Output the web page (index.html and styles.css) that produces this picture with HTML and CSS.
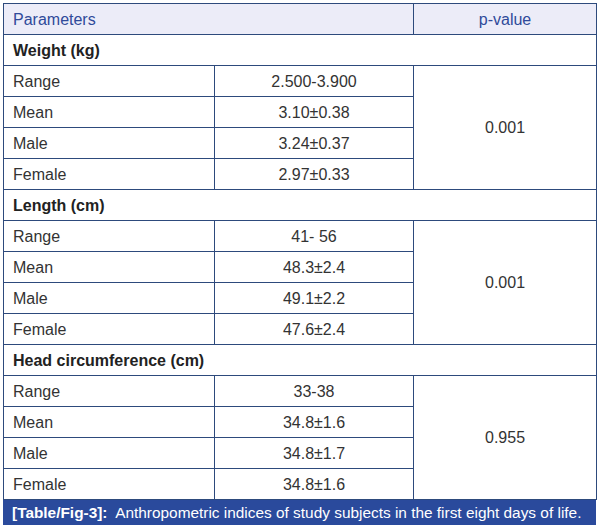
FILE: index.html
```html
<!DOCTYPE html>
<html>
<head>
<meta charset="utf-8">
<link rel="stylesheet" href="styles.css">
</head>
<body>
<div class="wrap">
<table class="data">
<colgroup><col class="c1"><col class="c2"><col class="c3"></colgroup>
<tr class="head"><th class="left" colspan="2">Parameters</th><th>p-value</th></tr>
<tr><td class="group" colspan="3">Weight (kg)</td></tr>
<tr><td>Range</td><td class="mid">2.500-3.900</td><td class="mid" rowspan="4">0.001</td></tr>
<tr><td>Mean</td><td class="mid">3.10±0.38</td></tr>
<tr><td>Male</td><td class="mid">3.24±0.37</td></tr>
<tr><td>Female</td><td class="mid">2.97±0.33</td></tr>
<tr><td class="group" colspan="3">Length (cm)</td></tr>
<tr><td>Range</td><td class="mid">41- 56</td><td class="mid" rowspan="4">0.001</td></tr>
<tr><td>Mean</td><td class="mid">48.3±2.4</td></tr>
<tr><td>Male</td><td class="mid">49.1±2.2</td></tr>
<tr><td>Female</td><td class="mid">47.6±2.4</td></tr>
<tr><td class="group" colspan="3">Head circumference (cm)</td></tr>
<tr><td>Range</td><td class="mid">33-38</td><td class="mid" rowspan="4">0.955</td></tr>
<tr><td>Mean</td><td class="mid">34.8±1.6</td></tr>
<tr><td>Male</td><td class="mid">34.8±1.7</td></tr>
<tr><td>Female</td><td class="mid">34.8±1.6</td></tr>
</table>
<div class="caption"><b>[Table/Fig-3]:</b>&nbsp; Anthropometric indices of study subjects in the first eight days of life.</div>
</div>
</body>
</html>
```
FILE: styles.css
```css
html, body { margin: 0; padding: 0; background: #fff; }
body { font-family: "Liberation Sans", Arial, Helvetica, sans-serif; font-size: 16px; color: #333; }
.wrap { padding: 3px 0 0 3px; width: 593px; }
.data { border-collapse: collapse; width: 593px; table-layout: fixed; }
.c1 { width: 211px; }
.c2 { width: 199px; }
.c3 { width: 183px; }
.data td, .data th { border: 1px solid #2d4a7c; height: 29px; padding: 1px 0 0 9px; font-weight: normal; text-align: left; vertical-align: middle; line-height: 18px; font-size: 16px; }
.data .mid { text-align: center; padding: 1px 0 0 0; }
.head th { background: #ececf8; color: #2f4a9a; text-align: center; padding: 1px 0 0 0; }
.head th.left { text-align: left; padding-left: 9px; }
.data td.group { font-weight: bold; color: #222; }
.caption { background: #2a4a9c; color: #fff; height: 25px; line-height: 25px; padding-left: 9px; font-size: 15.4px; white-space: nowrap; }
.caption b { font-weight: bold; }
```
